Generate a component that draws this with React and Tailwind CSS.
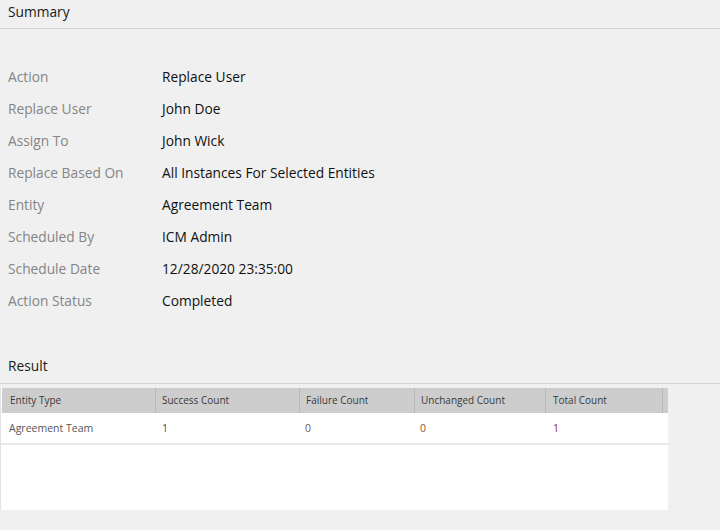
import React from "react";

const rows = [
  ["Action", "Replace User"],
  ["Replace User", "John Doe"],
  ["Assign To", "John Wick"],
  ["Replace Based On", "All Instances For Selected Entities"],
  ["Entity", "Agreement Team"],
  ["Scheduled By", "ICM Admin"],
  ["Schedule Date", "12/28/2020 23:35:00"],
  ["Action Status", "Completed"],
];

export default function App() {
  return (
    <div
      className="w-[720px] h-[530px] bg-[#f0f0f0] overflow-hidden text-[#1a1a1a]"
      style={{ fontFamily: '"Open Sans", "Noto Sans", sans-serif' }}
    >
      <div className="h-[29px] border-b border-[#d6d6d6] px-2 pt-[3px]">
        <div className="text-[13.75px] leading-[18px]">Summary</div>
      </div>
      <div className="mt-[32px] flex flex-col">
        {rows.map(([k, v]) => (
          <div key={k} className="flex h-[32px] items-center text-[13.75px]">
            <div className="w-[162px] pl-2 text-[#858585]">{k}</div>
            <div className="text-[#111111]">{v}</div>
          </div>
        ))}
      </div>
      <div className="mt-[39px] h-[28px] border-b border-[#d6d6d6] px-2 pt-[1px]">
        <div className="text-[13.75px] leading-[18px]">Result</div>
      </div>
      <div className="mt-[4px] w-[668px] bg-white border-l border-[#e2e2e2]">
        <div className="flex h-[25px] ml-[1px] bg-[#cdcdcd] text-[10px] text-[#3a3a3a] items-stretch">
          <div className="w-[153px] pl-2 flex items-center">Entity Type</div>
          <div className="w-[144px] pl-[6px] flex items-center border-l border-[#b9b9b9]">Success Count</div>
          <div className="w-[115px] pl-[6px] flex items-center border-l border-[#b9b9b9]">Failure Count</div>
          <div className="w-[131px] pl-[6px] flex items-center border-l border-[#b9b9b9]">Unchanged Count</div>
          <div className="w-[117px] pl-[7px] flex items-center border-l border-[#b9b9b9]">Total Count</div>
          <div className="flex-1 border-l border-[#b9b9b9]"></div>
        </div>
        <div className="flex h-[30px] pt-[2px] items-center text-[10.5px] text-[#555555]">
          <div className="w-[154px] pl-2">Agreement Team</div>
          <div className="w-[144px] pl-[7px] text-[#4a4a6a]">1</div>
          <div className="w-[115px] pl-[6px] text-[#6a5a4a]">0</div>
          <div className="w-[131px] pl-[6px] text-[#7a5a3a]">0</div>
          <div className="w-[117px] pl-[8px] text-[#8a2d4a]">1</div>
        </div>
        <div className="h-[2px] bg-[#e8e8e8]"></div>
        <div className="h-[65px]"></div>
      </div>
    </div>
  );
}
